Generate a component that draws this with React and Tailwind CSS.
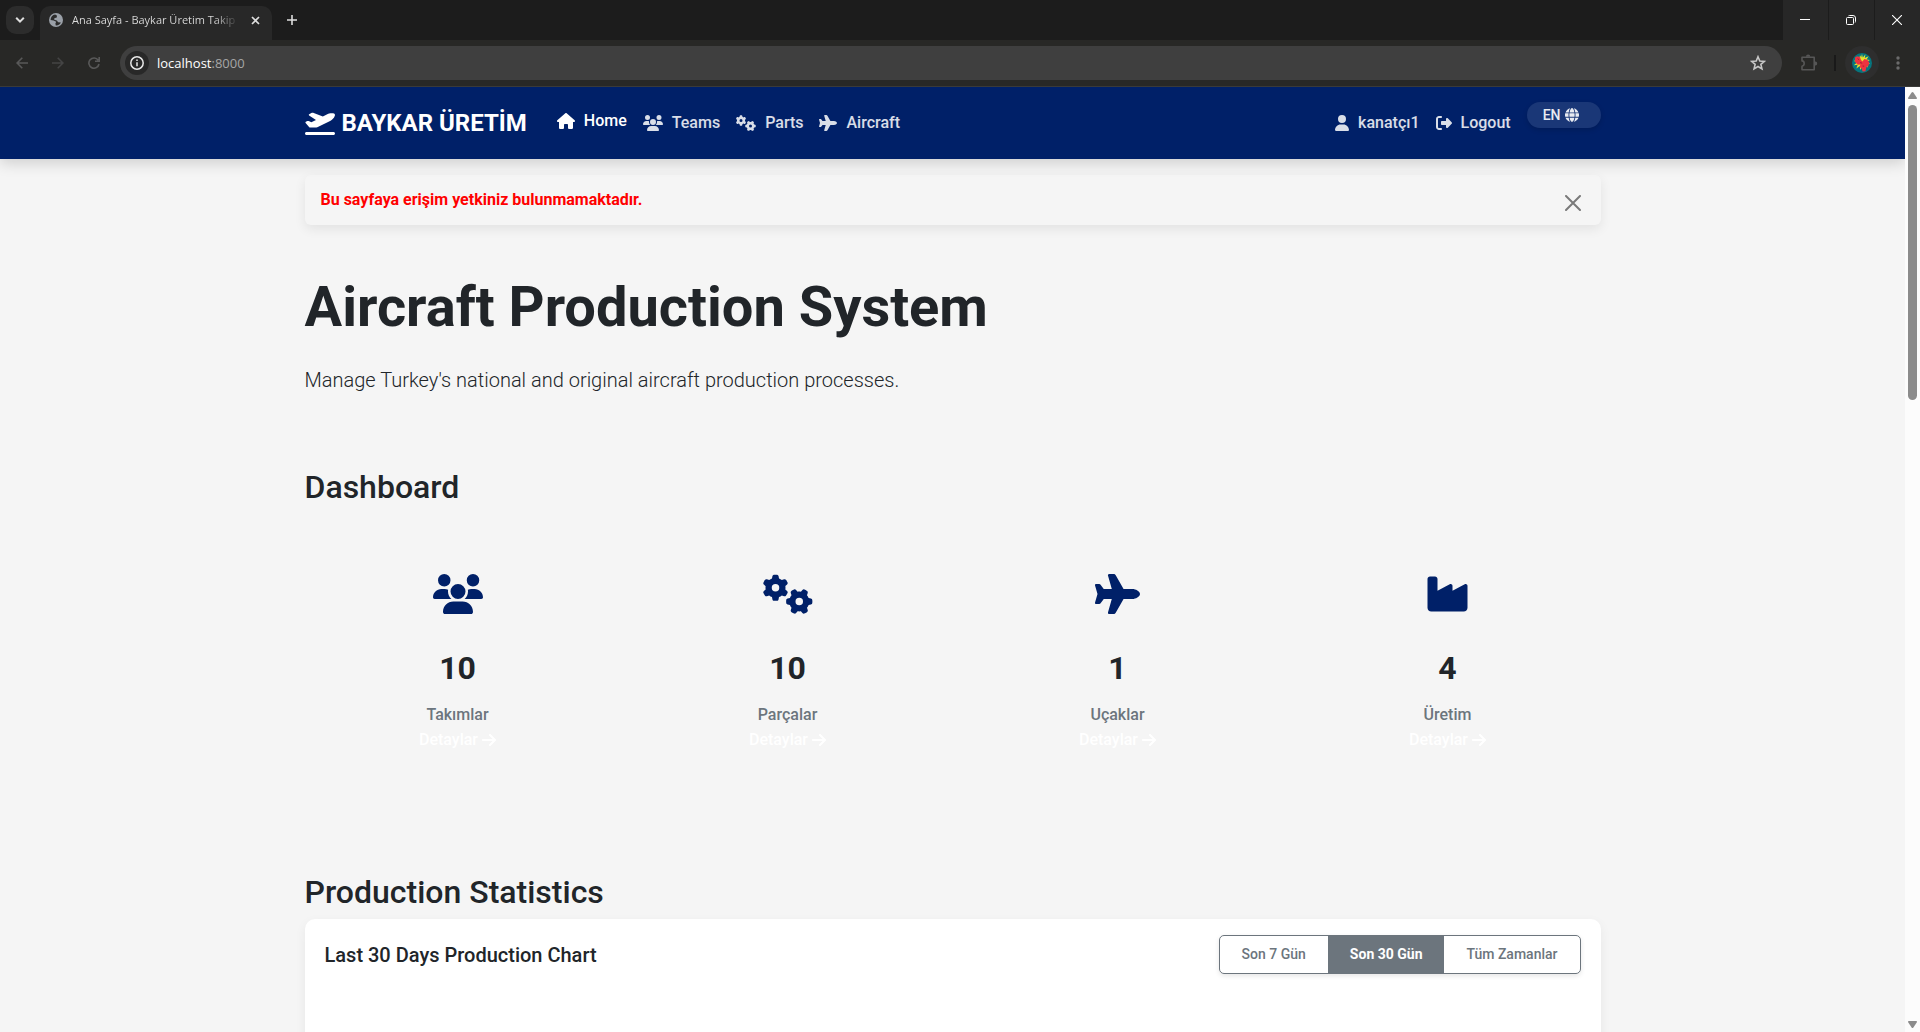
import React from "react";
import {
  FaPlaneDeparture,
  FaHouse,
  FaUsers,
  FaGears,
  FaPlane,
  FaUser,
  FaRightFromBracket,
  FaGlobe,
  FaIndustry,
  FaArrowRight,
} from "react-icons/fa6";

function TabStrip() {
  return (
    <div className="flex h-10 shrink-0 bg-[#1c1c1c]">
      <button aria-label="Search tabs" className="mt-1.5 ml-1.5 flex h-7 w-7 items-center justify-center rounded-[10px] bg-[#2c2c2c] text-[#dedede]">
        <svg width="10" height="8" viewBox="0 0 10 8" fill="none" stroke="currentColor" strokeWidth="2">
          <path d="M1.2 1.8 5 5.6 8.8 1.8" />
        </svg>
      </button>
      <div className="mt-1.5 ml-1.5 flex w-[232px] items-center rounded-t-[10px] bg-[#282828] pr-3 pb-[6px] pl-[9px]">
        <svg className="shrink-0" width="14" height="14" viewBox="0 0 14 14">
          <circle cx="7" cy="7" r="7" fill="#9aa0a8" />
          <path
            d="M6.2 1.6C3.5 2 1.6 4.2 1.6 6.9l3 .6 2.6 1.3-.8 1.7.4 2c2.9.1 4.4-1.4 5.1-3l-2.7-.3-1.4-1.8-2.6-.6.3-1.7 2-.4.6-2z"
            fill="#2b2b2b"
          />
        </svg>
        <span className="ml-[9px] min-w-0 flex-1 overflow-hidden whitespace-nowrap bg-linear-to-r from-[#dedede] from-85% to-transparent bg-clip-text text-[11px] leading-4 text-transparent">
          Ana Sayfa - Baykar Üretim Takip
        </span>
        <button aria-label="Close tab" className="ml-3 text-[#dedede]">
          <svg width="9" height="9" viewBox="0 0 9 9" stroke="currentColor" strokeWidth="1.7">
            <path d="M1 1l7 7M8 1 1 8" />
          </svg>
        </button>
      </div>
      <button aria-label="New tab" className="ml-[15px] self-center text-[#dedede]">
        <svg width="10" height="10" viewBox="0 0 10 10" stroke="currentColor" strokeWidth="1.6">
          <path d="M5 0v10M0 5h10" />
        </svg>
      </button>
      <div className="ml-auto flex gap-px text-white">
        <button aria-label="Minimize" className="flex w-[45px] items-center justify-center bg-[#272727] pr-0.5">
          <svg width="10" height="10" viewBox="0 0 10 10" stroke="currentColor" strokeWidth="1">
            <path d="M0 4.5h10" />
          </svg>
        </button>
        <button aria-label="Restore" className="flex w-[45px] items-center justify-center bg-[#272727] pr-0.5">
          <svg width="10" height="10" viewBox="0 0 10 10" fill="none" stroke="currentColor" strokeWidth="1">
            <rect x="0.5" y="2.5" width="7" height="7" rx="1" />
            <path d="M2.5 .8Q3 .5 3.5.5H7A2.5 2.5 0 0 1 9.5 3v3.5q0 .6-.4 1" />
          </svg>
        </button>
        <button aria-label="Close" className="flex w-[45px] items-center justify-center bg-[#272727] pr-0.5">
          <svg width="10" height="10" viewBox="0 0 10 10" stroke="currentColor" strokeWidth="1.1">
            <path d="M0 0l10 10M10 0 0 10" />
          </svg>
        </button>
      </div>
    </div>
  );
}

function Toolbar() {
  return (
    <div className="flex h-[47px] shrink-0 items-center border-b border-[#3a3a38] bg-[#282826]">
      <div className="flex w-[120px] items-center pl-4 text-[#585858]">
        <button aria-label="Back">
          <svg width="12" height="12" viewBox="0 0 12 12" fill="none" stroke="currentColor" strokeWidth="1.6">
            <path d="M12 6H1.2M6.3.8 1.1 6l5.2 5.2" />
          </svg>
        </button>
        <button aria-label="Forward" className="ml-6 text-[#444444]">
          <svg width="12" height="12" viewBox="0 0 12 12" fill="none" stroke="currentColor" strokeWidth="1.6">
            <path d="M0 6h10.8M5.7.8 10.9 6l-5.2 5.2" />
          </svg>
        </button>
        <button aria-label="Reload" className="ml-6">
          <svg width="12" height="12" viewBox="0 0 12 12" fill="none" stroke="currentColor" strokeWidth="1.6">
            <path d="M10.2 3.2A5.1 5.1 0 1 0 11 7M11.2 0v4.3H7" />
          </svg>
        </button>
      </div>
      <div className="flex h-[34px] flex-1 items-center rounded-full bg-[#3f3f3f] pr-4 pl-[5px]">
        <button aria-label="View site information" className="flex h-6 w-6 items-center justify-center rounded-full bg-[#282828] text-[#e8e8e8]">
          <svg width="14" height="14" viewBox="0 0 14 14" fill="none" stroke="currentColor" strokeWidth="1.5">
            <circle cx="7" cy="7" r="6.2" />
            <path d="M7 6.2v4M7 3.6v1.5" />
          </svg>
        </button>
        <div className="ml-2 flex-1 text-[13px] leading-5 text-white">
          localhost<span className="text-[#a6a6a6]">:8000</span>
        </div>
        <button aria-label="Bookmark this tab" className="text-[#c7c7c7]">
          <svg width="16" height="16" viewBox="0 0 15 15" fill="none" stroke="currentColor" strokeWidth="1.5">
            <path d="m7.5 1.6 1.7 4 4.3.4-3.3 2.8 1 4.2-3.7-2.2L3.8 13l1-4.2L1.5 6l4.3-.4z" />
          </svg>
        </button>
      </div>
      <button aria-label="Extensions" className="ml-[18px] text-[#565656]">
        <svg width="18" height="18" viewBox="0 0 18 18" fill="none" stroke="currentColor" strokeWidth="1.6">
          <path d="M2 3.2h12.2v12.6H2v-3.6c1.4-.2 2.2-1.2 2.2-2.6S3.4 7.1 2 6.9z" strokeLinejoin="round" />
          <path d="M6 2.8v-.6a2.1 1.7 0 0 1 4.2 0v.6zM15 7.4h.5a1.7 2.1 0 0 1 0 4.2H15z" fill="currentColor" stroke="none" />
        </svg>
      </button>
      <div className="ml-[16px] h-4 w-0.5 bg-[#191919]" />
      <button aria-label="Profile" className="ml-[9px] flex h-[34px] w-[34px] items-center justify-center rounded-full bg-[#2e2e2e]">
        <svg width="20" height="20" viewBox="0 0 20 20">
          <circle cx="10" cy="10" r="10" fill="#06757e" />
          <path
            d="m10 1 .8 3.4 2.6-2.9-.6 3.6 3.8-1.8-2 3.2 3.4.4-3 1.6 3.1 2.3-3.7-.1 1.6 3.7-3.4-2 .2 4.1-2.6-3.2-2 3.6-.4-4-3.4 2.7 1.3-3.8-3.9.5 3-2.5-3-2 3.6-.2-1.2-3.2 3 1.5L8 2.3l1.2 2z"
            fill="#e8e22a"
          />
          <path
            d="M3 4.6 5 3.2l3 .8 1 3 1.4 1.4 2-2.4 3 .8 1.8 2.6-.6 3.2-2.2 1.6-1 4-2.8.2-1-2.8-2-1.6.8-2.4-2.6.2L3 9z"
            fill="#ee3440"
          />
          <path d="m5.6 5.6 1.6 1.2M8 9.6l2.2.6M10.6 13l1.6.2" stroke="#a51f2f" />
        </svg>
      </button>
      <button aria-label="Chrome menu" className="mr-5 ml-[17px] text-[#6b6b6b]">
        <svg width="4" height="14" viewBox="0 0 4 14" fill="currentColor">
          <circle cx="2" cy="2" r="1.7" />
          <circle cx="2" cy="7" r="1.7" />
          <circle cx="2" cy="12" r="1.7" />
        </svg>
      </button>
    </div>
  );
}

function NavLink({ icon: Icon, iconWidth, label, active }) {
  return (
    <a
      href="#"
      className={
        active
          ? "mb-1 flex items-center gap-[9px] text-white"
          : "flex items-center gap-[9px] text-white/85"
      }
    >
      <Icon className={`h-4 ${iconWidth}`} />
      {label}
    </a>
  );
}

function Navbar() {
  return (
    <nav className="relative z-10 bg-[#002068] shadow-[0_4px_14px_rgba(0,0,0,0.16)]">
      <div className="mx-auto flex h-[72px] max-w-[1320px] items-center px-3 text-base leading-6 font-medium">
        <a href="#" className="mr-[30px] flex items-center gap-[7px] text-2xl font-bold text-white">
          <FaPlaneDeparture className="h-6 w-[30px]" />
          BAYKAR ÜRETİM
        </a>
        <div className="flex items-center gap-4">
          <NavLink icon={FaHouse} iconWidth="w-[18px]" label="Home" active />
          <NavLink icon={FaUsers} iconWidth="w-5" label="Teams" />
          <NavLink icon={FaGears} iconWidth="w-5" label="Parts" />
          <NavLink icon={FaPlane} iconWidth="w-[18px]" label="Aircraft" />
        </div>
        <div className="ml-auto flex items-center gap-4">
          <NavLink icon={FaUser} iconWidth="w-3.5" label="kanatçı1" />
          <NavLink icon={FaRightFromBracket} iconWidth="w-4" label="Logout" />
          <button className="mb-4 flex h-[26px] items-center gap-1 rounded-full bg-[#1a3777] pr-[22px] pl-4 text-sm font-medium text-white/90 shadow-[0_2px_5px_rgba(0,0,0,0.15)]">
            EN
            <FaGlobe className="h-3.5 w-3.5" />
          </button>
        </div>
      </div>
    </nav>
  );
}

function Stat({ icon: Icon, iconWidth, value, label }) {
  return (
    <div className="flex flex-col items-center">
      <Icon className={`h-10 text-[#002068] ${iconWidth}`} />
      <div className="mt-[35px] text-[32px] leading-[38px] font-bold">{value}</div>
      <div className="mt-4 text-base leading-6 font-medium text-[#6c757d]">{label}</div>
      <a href="#" className="mt-px flex items-center gap-1 text-base leading-6 font-medium text-white">
        Detaylar
        <FaArrowRight className="h-4 w-3.5" />
      </a>
    </div>
  );
}

function Content() {
  return (
    <main className="mx-auto max-w-[1320px] px-3 pt-4">
      <div
        role="alert"
        className="flex h-[50px] justify-between rounded-md bg-[#f5f5f5] pr-5 pl-4 shadow-[0_4px_12px_rgba(0,0,0,0.08)]"
      >
        <p className="mt-[13px] text-base leading-6 font-bold text-[#ff0000]">
          Bu sayfaya erişim yetkiniz bulunmamaktadır.
        </p>
        <button aria-label="Close" className="mt-1.5 text-[#7a7a7a]">
          <svg width="16" height="16" viewBox="0 0 16 16" stroke="currentColor" strokeWidth="2" strokeLinecap="round">
            <path d="m1 1 14 14M15 1 1 15" />
          </svg>
        </button>
      </div>

      <h1 className="mt-12 text-[56px] leading-[68px] font-bold">Aircraft Production System</h1>
      <p className="mt-6 text-xl leading-[30px] font-light">
        Manage Turkey's national and original aircraft production processes.
      </p>

      <h2 className="mt-[73px] text-[32px] leading-[38px] font-medium">Dashboard</h2>
      <div className="-mx-3 mt-[68px] grid grid-cols-4">
        <Stat icon={FaUsers} iconWidth="w-[50px]" value="10" label="Takımlar" />
        <Stat icon={FaGears} iconWidth="w-[50px]" value="10" label="Parçalar" />
        <Stat icon={FaPlane} iconWidth="w-[45px]" value="1" label="Uçaklar" />
        <Stat icon={FaIndustry} iconWidth="w-[45px]" value="4" label="Üretim" />
      </div>

      <h2 className="mt-[121px] text-[32px] leading-[38px] font-medium">Production Statistics</h2>
      <section className="mt-2 rounded-[10px] bg-white px-5 pt-4 pb-96 shadow-[0_4px_12px_rgba(0,0,0,0.06)]">
        <div className="flex items-center justify-between">
          <h3 className="text-xl leading-6 font-medium">Last 30 Days Production Chart</h3>
          <div
            role="group"
            aria-label="Chart range"
            className="flex h-[39px] overflow-hidden rounded-[5px] border border-[#6c757d] text-sm font-medium text-[#6c757d] shadow-[0_2px_5px_rgba(0,0,0,0.1)]"
          >
            <button className="px-[22px] pb-0.5">Son 7 Gün</button>
            <button className="bg-[#6c757d] px-[22px] pb-0.5 font-bold text-white">Son 30 Gün</button>
            <button className="px-[22px] pb-0.5">Tüm Zamanlar</button>
          </div>
        </div>
      </section>
    </main>
  );
}

function Scrollbar() {
  return (
    <div className="flex w-[15px] shrink-0 flex-col items-center bg-[#fcfcfc] pt-[5px] pb-1">
      <svg width="9" height="7" viewBox="0 0 9 7" fill="#8b8b8b">
        <path d="M3.6.6q.9-1.2 1.8 0L9 6q0 1-.8 1H.8Q0 7 0 6z" />
      </svg>
      <div className="mt-1.5 w-[9px] flex-1">
        <div className="h-[295px] rounded-full bg-[#8b8b8b]" />
      </div>
      <svg width="9" height="7" viewBox="0 0 9 7" fill="#8b8b8b">
        <path d="M3.6 6.4q.9 1.2 1.8 0L9 1q0-1-.8-1H.8Q0 0 0 1z" />
      </svg>
    </div>
  );
}

export default function App() {
  return (
    <div className="flex h-screen flex-col overflow-hidden font-['Open_Sans','Noto_Sans',sans-serif]">
      <TabStrip />
      <Toolbar />
      <div className="flex min-h-0 flex-1">
        <div className="min-w-0 flex-1 overflow-hidden bg-[#f5f5f5] font-[Roboto,sans-serif] text-[#212529]">
          <Navbar />
          <Content />
        </div>
        <Scrollbar />
      </div>
    </div>
  );
}
